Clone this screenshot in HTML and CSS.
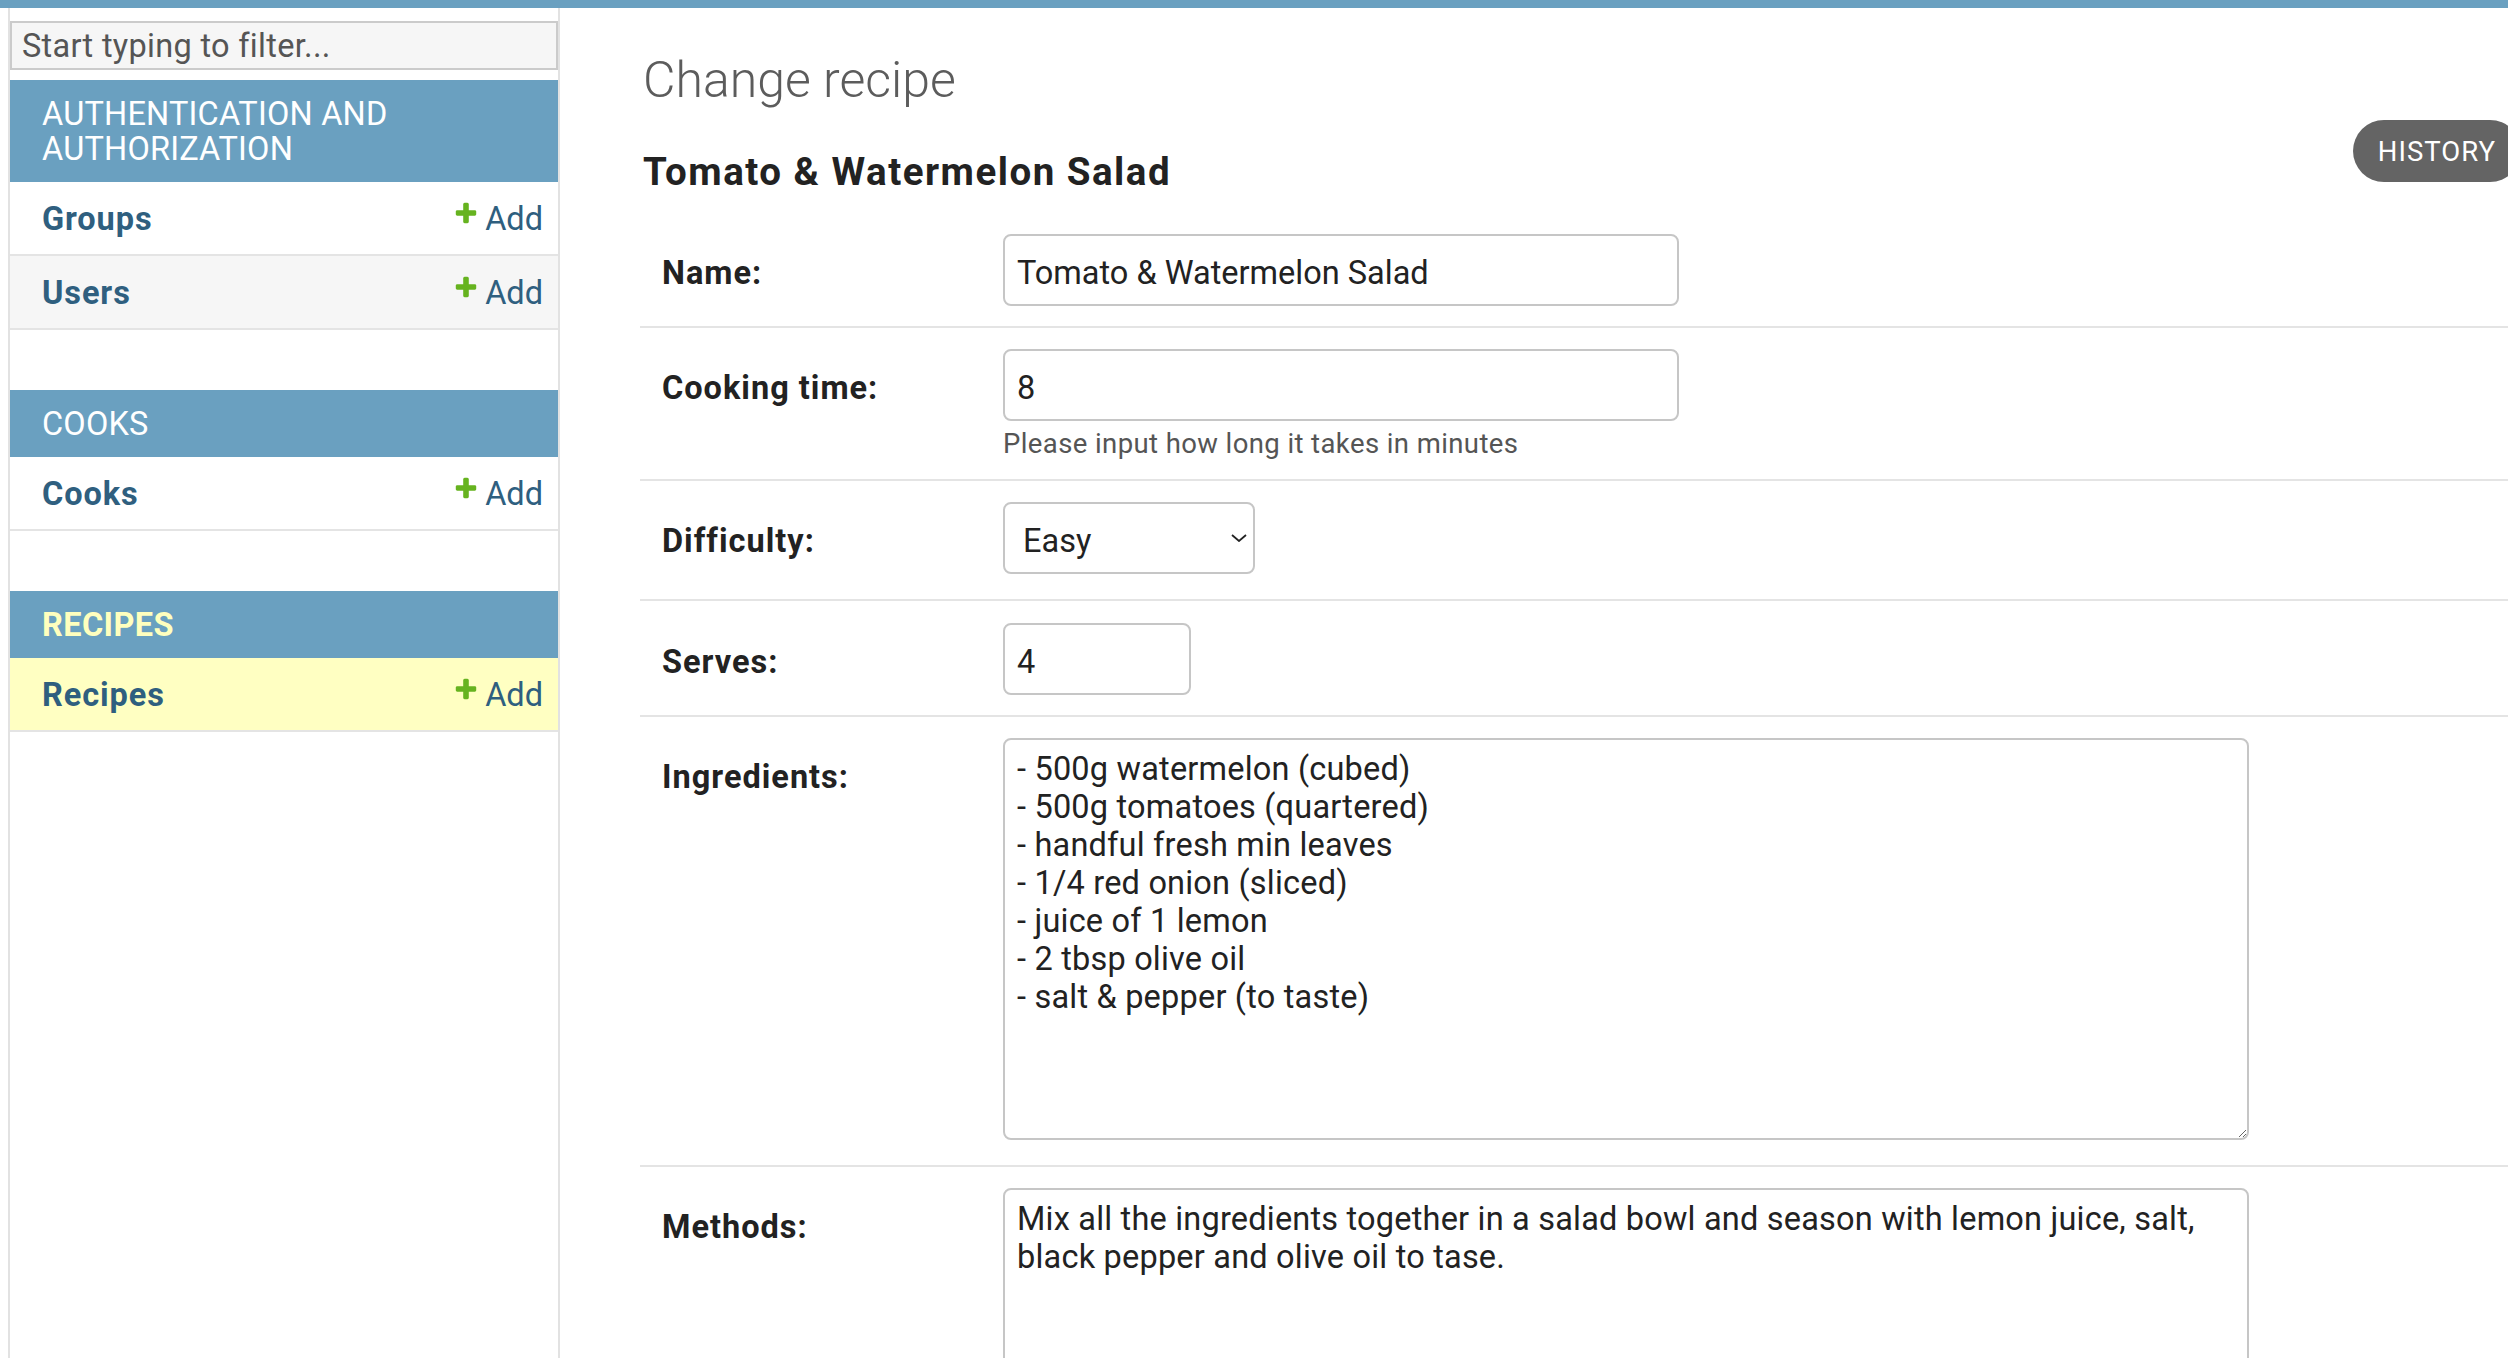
FILE: index.html
```html
<!DOCTYPE html>
<html lang="en">
<head>
<meta charset="utf-8">
<title>Change recipe | Django site admin</title>
<link rel="stylesheet" href="styles.css">
</head>
<body>
<div class="topbar"></div>
<div class="page">
  <div class="toggle"></div>
  <nav class="sidebar">
    <input class="nav-filter" type="search" placeholder="Start typing to filter...">
    <section class="module">
      <div class="caption">Authentication and Authorization</div>
      <div class="row"><a class="model" href="#">Groups</a><a class="addlink" href="#"><svg viewBox="0 0 1792 1792"><path fill="#66b31f" d="M1600 796v192q0 40-28 68t-68 28h-416v416q0 40-28 68t-68 28h-192q-40 0-68-28t-28-68v-416h-416q-40 0-68-28t-28-68v-192q0-40 28-68t68-28h416v-416q0-40 28-68t68-28h192q40 0 68 28t28 68v416h416q40 0 68 28t28 68z"/></svg>Add</a></div>
      <div class="row alt"><a class="model" href="#">Users</a><a class="addlink" href="#"><svg viewBox="0 0 1792 1792"><path fill="#66b31f" d="M1600 796v192q0 40-28 68t-68 28h-416v416q0 40-28 68t-68 28h-192q-40 0-68-28t-28-68v-416h-416q-40 0-68-28t-28-68v-192q0-40 28-68t68-28h416v-416q0-40 28-68t68-28h192q40 0 68 28t28 68v416h416q40 0 68 28t28 68z"/></svg>Add</a></div>
    </section>
    <section class="module">
      <div class="caption">Cooks</div>
      <div class="row"><a class="model" href="#">Cooks</a><a class="addlink" href="#"><svg viewBox="0 0 1792 1792"><path fill="#66b31f" d="M1600 796v192q0 40-28 68t-68 28h-416v416q0 40-28 68t-68 28h-192q-40 0-68-28t-28-68v-416h-416q-40 0-68-28t-28-68v-192q0-40 28-68t68-28h416v-416q0-40 28-68t68-28h192q40 0 68 28t28 68v416h416q40 0 68 28t28 68z"/></svg>Add</a></div>
    </section>
    <section class="module">
      <div class="caption current">Recipes</div>
      <div class="row current"><a class="model" href="#">Recipes</a><a class="addlink" href="#"><svg viewBox="0 0 1792 1792"><path fill="#66b31f" d="M1600 796v192q0 40-28 68t-68 28h-416v416q0 40-28 68t-68 28h-192q-40 0-68-28t-28-68v-416h-416q-40 0-68-28t-28-68v-192q0-40 28-68t68-28h416v-416q0-40 28-68t68-28h192q40 0 68 28t28 68v416h416q40 0 68 28t28 68z"/></svg>Add</a></div>
    </section>
  </nav>
  <main class="content">
    <div class="content-head">
      <div class="titles">
        <h1>Change recipe</h1>
        <h2>Tomato &amp; Watermelon Salad</h2>
      </div>
      <a class="history" href="#">History</a>
    </div>
    <form class="fieldset">
      <div class="form-row row-first">
        <label>Name:</label>
        <div class="field"><input class="text-input" type="text" value="Tomato &amp; Watermelon Salad"></div>
      </div>
      <div class="form-row">
        <label>Cooking time:</label>
        <div class="field">
          <input class="text-input" type="text" value="8">
          <p class="help">Please input how long it takes in minutes</p>
        </div>
      </div>
      <div class="form-row row-select">
        <label>Difficulty:</label>
        <div class="field">
          <div class="select-wrap">
            <select class="select"><option>Easy</option><option>Medium</option><option>Hard</option></select>
            <svg class="chevron" viewBox="0 0 16 8"><polyline points="1,1 8,7 15,1" fill="none" stroke="#222" stroke-width="1.8"/></svg>
          </div>
        </div>
      </div>
      <div class="form-row row-serves">
        <label>Serves:</label>
        <div class="field"><input class="text-input short" type="text" value="4"></div>
      </div>
      <div class="form-row row-area">
        <label>Ingredients:</label>
        <div class="field"><textarea class="area">- 500g watermelon (cubed)
- 500g tomatoes (quartered)
- handful fresh min leaves
- 1/4 red onion (sliced)
- juice of 1 lemon
- 2 tbsp olive oil
- salt &amp; pepper (to taste)</textarea></div>
      </div>
      <div class="form-row">
        <label>Methods:</label>
        <div class="field"><textarea class="area">Mix all the ingredients together in a salad bowl and season with lemon juice, salt, black pepper and olive oil to tase.</textarea></div>
      </div>
    </form>
  </main>
</div>
</body>
</html>
```

FILE: styles.css
```css
html, body {
  margin: 0;
  padding: 0;
}

body {
  overflow: hidden;
  background: #ffffff;
  color: #222222;
  font-family: Roboto, "Liberation Sans", Arial, sans-serif;
  font-size: 32.5px;
}

.topbar {
  height: 8px;
  background: #6aa0c0;
}

.page {
  display: flex;
  width: 2601px;
  min-height: 1350px;
}

.toggle {
  flex: 0 0 8px;
  border-right: 2px solid #e2e2e2;
}

.sidebar {
  flex: 0 0 550px;
  box-sizing: border-box;
  border-right: 2px solid #e2e2e2;
}

.nav-filter {
  display: block;
  box-sizing: border-box;
  width: 100%;
  height: 49px;
  margin: 13px 0 10px;
  padding: 4px 10px;
  border: 2px solid #cbcbcb;
  border-radius: 0;
  background: #f6f6f6;
  font-family: inherit;
  font-size: 32.5px;
  letter-spacing: 0.3px;
  color: #333333;
  outline: none;
  -webkit-appearance: none;
  appearance: none;
}

.nav-filter::placeholder {
  color: #555555;
  opacity: 1;
}

.module {
  margin-bottom: 60px;
}

.caption {
  background: #6aa0c0;
  color: #ffffff;
  font-size: 32.5px;
  line-height: 35px;
  letter-spacing: 0.2px;
  text-transform: uppercase;
  padding: 17px 16px 15px 32px;
}

.caption.current {
  color: #ffffbe;
  font-weight: 700;
  letter-spacing: 0.4px;
}

.row {
  display: flex;
  justify-content: space-between;
  align-items: flex-start;
  padding: 17px 15px 15px 32px;
  line-height: 40px;
  font-size: 32.5px;
  border-bottom: 2px solid #e4e4e4;
}

.row.alt {
  background: #f6f6f6;
}

.row.current {
  background: #ffffc2;
}

.model {
  font-weight: 700;
  letter-spacing: 0.9px;
  color: #2f5f7f;
  text-decoration: none;
}

.addlink {
  display: flex;
  align-items: flex-start;
  color: #2f5f7f;
  text-decoration: none;
}

.addlink svg {
  width: 26px;
  height: 26px;
  margin: 1px 6px 0 0;
  flex: 0 0 26px;
}

.content {
  flex: 1;
  min-width: 0;
  padding: 42px 80px 0;
}

.content-head {
  display: flex;
  justify-content: space-between;
  align-items: flex-start;
  padding-left: 3px;
}

h1 {
  margin: 0;
  font-size: 50px;
  font-weight: 300;
  line-height: 60px;
  color: #5c5c5c;
}

h2 {
  margin: 39px 0 0;
  font-size: 38.5px;
  font-weight: 700;
  letter-spacing: 1.5px;
  line-height: 46px;
  color: #222222;
}

.history {
  margin-top: 70px;
  height: 62px;
  box-sizing: border-box;
  padding: 2px 25px 0;
  line-height: 60px;
  border-radius: 31px;
  background: #646464;
  color: #ffffff;
  font-size: 27.5px;
  letter-spacing: 1px;
  text-transform: uppercase;
  text-decoration: none;
}

.fieldset {
  margin: 18px 0 0;
}

.form-row {
  display: flex;
  align-items: flex-start;
  padding: 21px 20px 20px 22px;
  border-bottom: 2px solid #e4e4e4;
}

.form-row.row-select {
  padding-bottom: 25px;
}

.form-row.row-serves {
  padding-top: 22px;
}

.form-row.row-area {
  padding-bottom: 25px;
}

.form-row label {
  flex: 0 0 341px;
  box-sizing: border-box;
  padding-top: 6px;
  font-weight: 700;
  font-size: 32.5px;
  letter-spacing: 1px;
  line-height: 66px;
  color: #222222;
}

.field {
  display: flex;
  flex-direction: column;
}

.text-input {
  display: block;
  box-sizing: border-box;
  width: 676px;
  height: 72px;
  margin: 0;
  padding: 6px 12px 0;
  border: 2px solid #c6c6c6;
  border-radius: 8px;
  font-family: inherit;
  font-size: 32.5px;
  color: #222222;
  background: #ffffff;
  outline: none;
}

.text-input.short {
  width: 188px;
}

.help {
  margin: 8px 0 0;
  font-size: 27.5px;
  letter-spacing: 0.4px;
  line-height: 30px;
  color: #555555;
}

.select-wrap {
  position: relative;
  width: 252px;
  height: 72px;
}

.select {
  display: block;
  box-sizing: border-box;
  width: 100%;
  height: 100%;
  margin: 0;
  padding: 6px 40px 0 18px;
  border: 2px solid #c6c6c6;
  border-radius: 8px;
  background: #ffffff;
  font-family: inherit;
  font-size: 32.5px;
  color: #222222;
  -webkit-appearance: none;
  appearance: none;
  outline: none;
}

.chevron {
  position: absolute;
  right: 8px;
  top: 32px;
  width: 16px;
  height: 8px;
  pointer-events: none;
}

.area {
  display: block;
  box-sizing: border-box;
  width: 1246px;
  height: 402px;
  margin: 0;
  padding: 10px 12px 10px;
  border: 2px solid #c6c6c6;
  border-radius: 8px;
  font-family: inherit;
  font-size: 32.5px;
  letter-spacing: 0.2px;
  line-height: 38px;
  color: #222222;
  background: #ffffff;
  outline: none;
}
```
